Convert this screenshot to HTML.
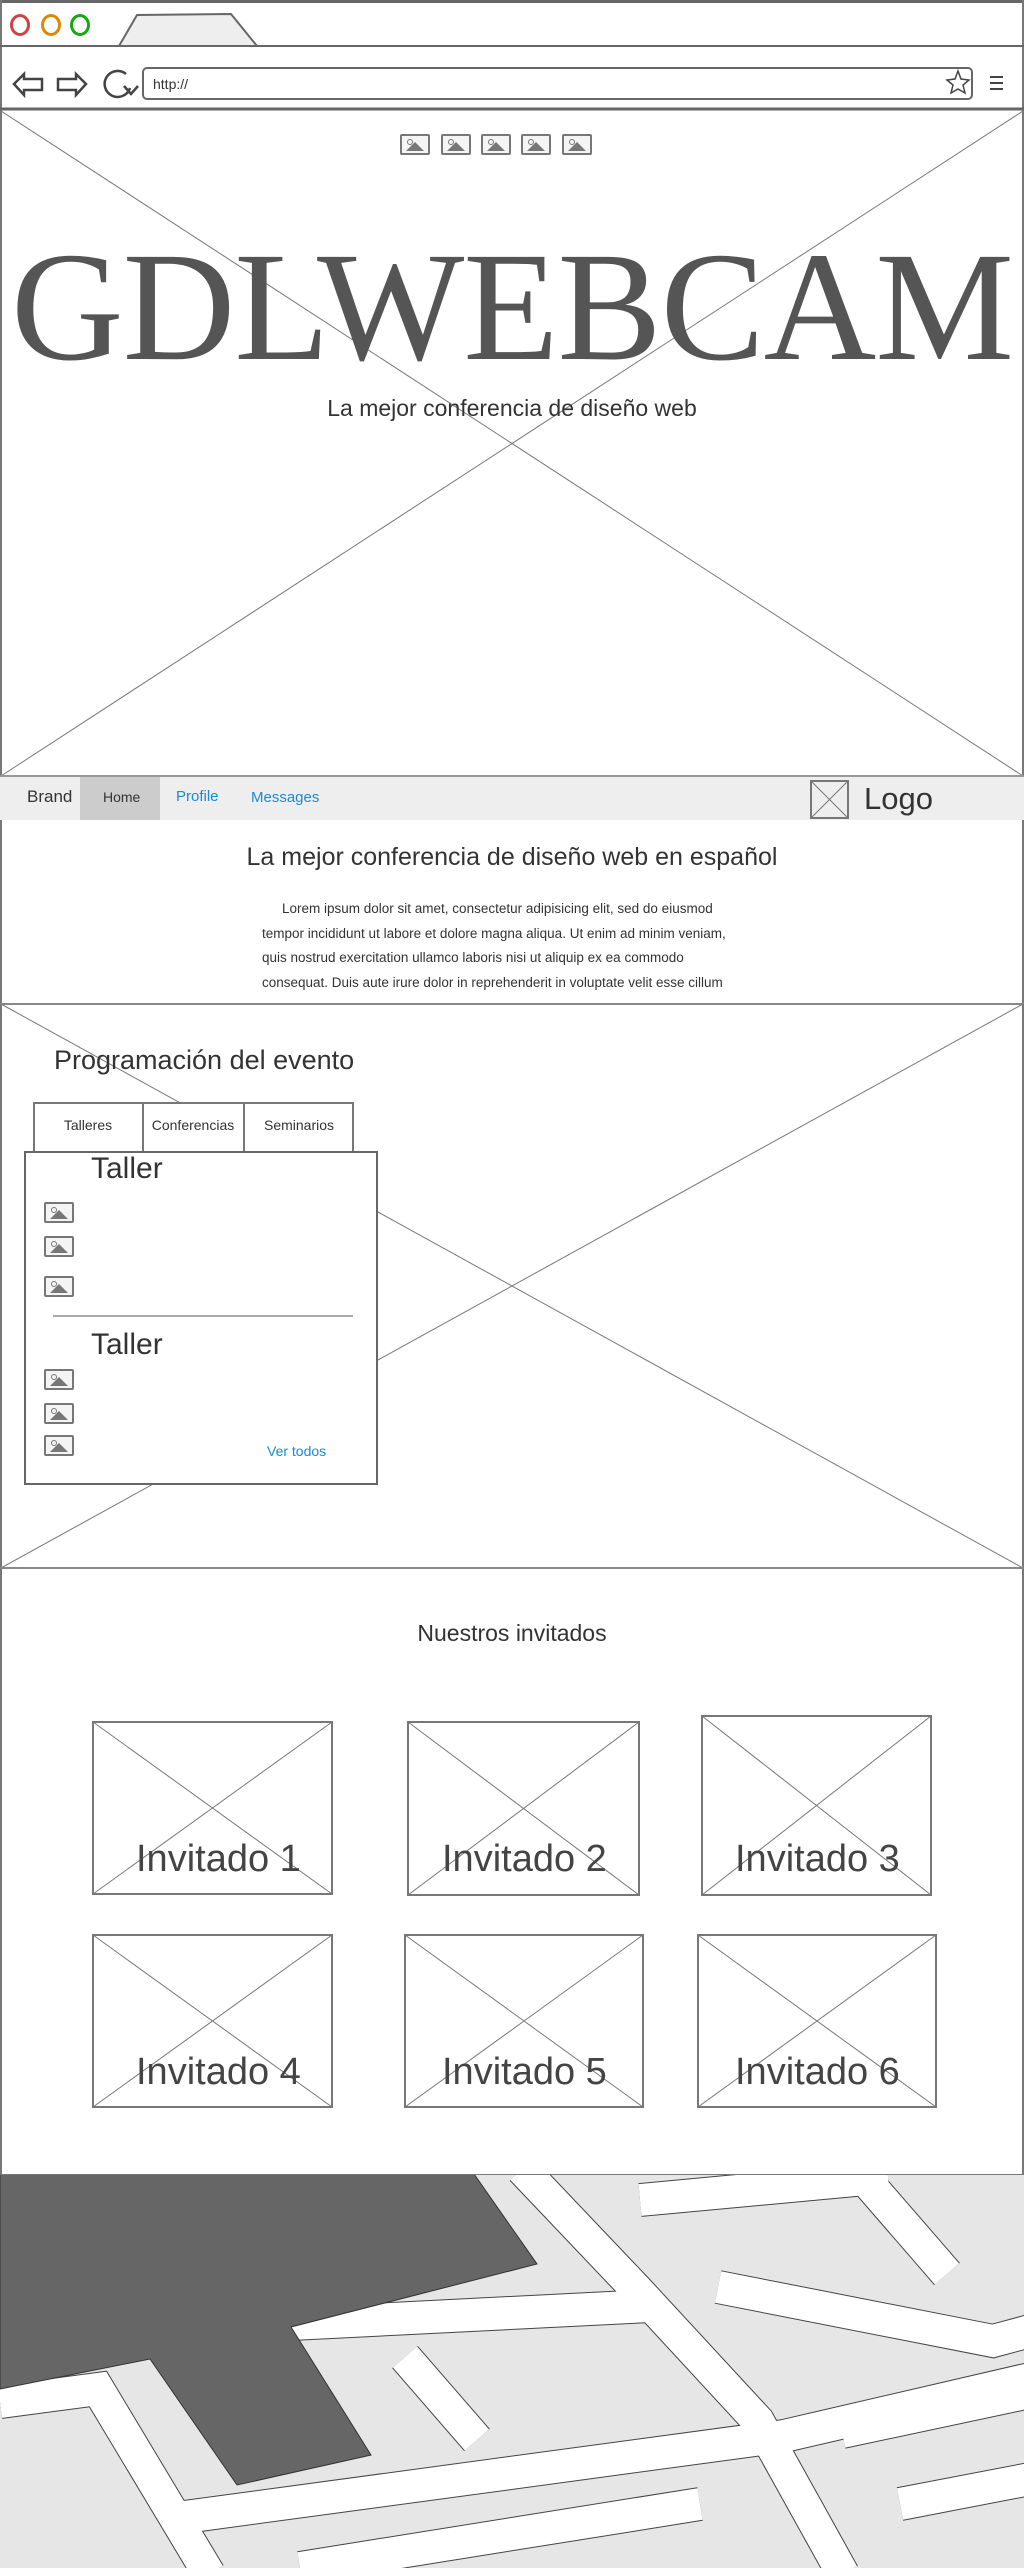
<!DOCTYPE html>
<html><head><meta charset="utf-8"><style>
*{margin:0;padding:0;box-sizing:border-box}
body{width:1024px;height:2568px;position:relative;background:#fff;font-family:"Liberation Sans",sans-serif;color:#444;overflow:hidden}
.a{position:absolute}
.ic{position:absolute;width:30px;height:21px;border:2px solid #777;border-radius:2px;background:#f4f4f4}
.ic:after{content:"";position:absolute;left:4px;bottom:2px;border-left:9px solid transparent;border-right:9px solid transparent;border-bottom:9px solid #777}
.ic:before{content:"";position:absolute;left:5px;top:3px;width:4px;height:4px;border:1px solid #777;border-radius:50%}
.lbl{position:absolute;font-size:38px;color:#444;white-space:nowrap}
</style></head><body>
<div class="a" style="left:0;top:0;width:1024px;height:3px;background:#666"></div>
<div class="a" style="left:0;top:0;width:2px;height:2174px;background:#777"></div>
<div class="a" style="left:1022px;top:0;width:2px;height:2174px;background:#777"></div>
<div class="a" style="left:10px;top:14px;width:20px;height:22px;border:3px solid #c44;border-radius:50%"></div>
<div class="a" style="left:41px;top:14px;width:20px;height:22px;border:3px solid #d80;border-radius:50%"></div>
<div class="a" style="left:70px;top:14px;width:20px;height:22px;border:3px solid #1a1;border-radius:50%"></div>
<svg class="a" style="left:0;top:0" width="1024" height="112">
<polygon points="119,46 137,15 231,14 257,46" fill="#eee" stroke="#666" stroke-width="2"/>
<line x1="0" y1="46" x2="1024" y2="46" stroke="#666" stroke-width="2"/>
<line x1="0" y1="109" x2="1024" y2="109" stroke="#666" stroke-width="3"/>
<path d="M14,84 L24,74 L24,79 L42,79 L42,90 L24,90 L24,95 Z" fill="none" stroke="#444" stroke-width="2.5"/>
<path d="M86,84 L76,74 L76,79 L58,79 L58,90 L76,90 L76,95 Z" fill="none" stroke="#444" stroke-width="2.5"/>
<path d="M130,88 A13,13 0 1 1 126,74" fill="none" stroke="#444" stroke-width="2.5"/>
<path d="M124,86 L131,94 L138,86" fill="none" stroke="#444" stroke-width="2.5"/>
<rect x="143" y="68" width="829" height="31" rx="4" fill="#fff" stroke="#666" stroke-width="2"/>
<text x="153" y="89" font-size="14" fill="#333" font-family="Liberation Sans">http://</text>
<polygon points="958,71 961,79 969,80 963,85 965,93 958,89 951,93 953,85 947,80 955,79" fill="none" stroke="#444" stroke-width="1.5"/>
<g stroke="#444" stroke-width="2"><line x1="990" y1="77" x2="1003" y2="77"/><line x1="990" y1="83" x2="1003" y2="83"/><line x1="990" y1="89" x2="1003" y2="89"/></g>
</svg>
<svg class="a" style="left:0;top:111px" width="1024" height="666">
<line x1="1" y1="0" x2="1023" y2="665" stroke="#777" stroke-width="1"/>
<line x1="1023" y1="0" x2="1" y2="665" stroke="#777" stroke-width="1"/>
</svg>
<div class="ic" style="left:400px;top:134px"></div>
<div class="ic" style="left:441px;top:134px"></div>
<div class="ic" style="left:481px;top:134px"></div>
<div class="ic" style="left:521px;top:134px"></div>
<div class="ic" style="left:562px;top:134px"></div>
<div class="a" style="left:0;top:222px;width:1024px;text-align:center;font-family:'Liberation Serif',serif;font-size:156px;line-height:170px;color:#555;letter-spacing:-1px">GDLWEBCAM</div>
<div class="a" style="left:0;top:395px;width:1024px;text-align:center;font-size:23px;color:#333">La mejor conferencia de diseño web</div>
<div class="a" style="left:0;top:775px;width:1024px;height:45px;background:#eee;border-top:2px solid #999"></div>
<div class="a" style="left:80px;top:777px;width:80px;height:43px;background:#ccc"></div>
<div class="a" style="left:27px;top:787px;font-size:17px;color:#333">Brand</div>
<div class="a" style="left:103px;top:789px;font-size:14px;color:#333">Home</div>
<div class="a" style="left:176px;top:788px;font-size:15px;color:#1a8ad4">Profile</div>
<div class="a" style="left:251px;top:789px;font-size:15px;color:#1a8ad4">Messages</div>
<svg class="a" style="left:810px;top:780px" width="40" height="40"><rect x="1" y="1" width="37" height="37" fill="none" stroke="#777" stroke-width="2"/><line x1="1" y1="1" x2="38" y2="38" stroke="#777"/><line x1="38" y1="1" x2="1" y2="38" stroke="#777"/></svg>
<div class="a" style="left:864px;top:781px;font-size:31px;color:#333">Logo</div>
<div class="a" style="left:0;top:843px;width:1024px;text-align:center;font-size:25px;color:#333">La mejor conferencia de diseño web en español</div>
<div class="a" style="left:262px;top:897px;width:490px;font-size:13.5px;line-height:24.5px;color:#333;text-indent:20px;white-space:nowrap">Lorem ipsum dolor sit amet, consectetur adipisicing elit, sed do eiusmod<br>tempor incididunt ut labore et dolore magna aliqua. Ut enim ad minim veniam,<br>quis nostrud exercitation ullamco laboris nisi ut aliquip ex ea commodo<br>consequat. Duis aute irure dolor in reprehenderit in voluptate velit esse cillum</div>
<div class="a" style="left:0;top:1003px;width:1024px;height:2px;background:#888"></div>
<svg class="a" style="left:0;top:1004px" width="1024" height="564">
<line x1="1" y1="0" x2="1023" y2="564" stroke="#777"/>
<line x1="1023" y1="0" x2="1" y2="564" stroke="#777"/>
</svg>
<div class="a" style="left:54px;top:1045px;font-size:27px;color:#333">Programación del evento</div>
<div class="a" style="left:33px;top:1102px;width:321px;height:50px;border:2px solid #777;border-bottom:none;background:#fff"></div>
<div class="a" style="left:142px;top:1102px;width:2px;height:50px;background:#777"></div>
<div class="a" style="left:243px;top:1102px;width:2px;height:50px;background:#777"></div>
<div class="a" style="left:33px;top:1117px;width:110px;text-align:center;font-size:14px;color:#333">Talleres</div>
<div class="a" style="left:143px;top:1117px;width:100px;text-align:center;font-size:14px;color:#333">Conferencias</div>
<div class="a" style="left:244px;top:1117px;width:110px;text-align:center;font-size:14px;color:#333">Seminarios</div>
<div class="a" style="left:24px;top:1151px;width:354px;height:334px;border:2px solid #666;background:#fff"></div>
<div class="a" style="left:91px;top:1152px;font-size:30px;color:#333">Taller</div>
<div class="ic" style="left:44px;top:1202px"></div>
<div class="ic" style="left:44px;top:1236px"></div>
<div class="ic" style="left:44px;top:1276px"></div>
<div class="a" style="left:53px;top:1315px;width:300px;height:2px;background:#aaa"></div>
<div class="a" style="left:91px;top:1328px;font-size:30px;color:#333">Taller</div>
<div class="ic" style="left:44px;top:1369px"></div>
<div class="ic" style="left:44px;top:1403px"></div>
<div class="ic" style="left:44px;top:1435px"></div>
<div class="a" style="left:267px;top:1443px;font-size:14px;color:#1a8ad4">Ver todos</div>
<div class="a" style="left:0;top:1567px;width:1024px;height:2px;background:#888"></div>
<div class="a" style="left:0;top:1620px;width:1024px;text-align:center;font-size:23px;color:#333">Nuestros invitados</div>
<svg class="a" style="left:0;top:1700px" width="1024" height="420" fill="none" stroke="#777">
<g stroke-width="2"><rect x="93" y="22" width="239" height="172"/><rect x="408" y="22" width="231" height="173"/><rect x="702" y="16" width="229" height="179"/><rect x="93" y="235" width="239" height="172"/><rect x="405" y="235" width="238" height="172"/><rect x="698" y="235" width="238" height="172"/></g>
<g stroke-width="1"><path d="M93,22 L332,194 M332,22 L93,194 M408,22 L639,195 M639,22 L408,195 M702,16 L931,195 M931,16 L702,195 M93,235 L332,407 M332,235 L93,407 M405,235 L643,407 M643,235 L405,407 M698,235 L936,407 M936,235 L698,407"/></g>
</svg>
<div class="lbl" style="left:136px;top:1838px">Invitado 1</div>
<div class="lbl" style="left:442px;top:1838px">Invitado 2</div>
<div class="lbl" style="left:735px;top:1838px">Invitado 3</div>
<div class="lbl" style="left:136px;top:2051px">Invitado 4</div>
<div class="lbl" style="left:442px;top:2051px">Invitado 5</div>
<div class="lbl" style="left:735px;top:2051px">Invitado 6</div>
<svg class="a" style="left:0;top:2174px" width="1024" height="394">
<rect width="1024" height="394" fill="#e6e6e6"/>
<g fill="none" stroke-linejoin="miter" stroke-linecap="butt">
<g stroke="#444" stroke-width="34">
<polyline points="522,-5 637,116 758,247 843,400"/>
<polyline points="0,228 98,215 209,400"/>
<polyline points="170,345 784,262 1030,205"/>
<polyline points="291,150 650,132"/>
<polyline points="640,26 888,3"/>
<polyline points="856,-5 947,100"/>
<polyline points="718,113 993,167 1030,157"/>
<polyline points="405,183 477,266"/>
<polyline points="842,258 1030,218"/>
<polyline points="900,330 1030,305"/>
<polyline points="300,394 700,330"/>
</g>
<g stroke="#fff" stroke-width="32">
<polyline points="522,-5 637,116 758,247 843,400"/>
<polyline points="0,228 98,215 209,400"/>
<polyline points="170,345 784,262 1030,205"/>
<polyline points="291,150 650,132"/>
<polyline points="640,26 888,3"/>
<polyline points="856,-5 947,100"/>
<polyline points="718,113 993,167 1030,157"/>
<polyline points="405,183 477,266"/>
<polyline points="842,258 1030,218"/>
<polyline points="900,330 1030,305"/>
<polyline points="300,394 700,330"/>
</g>
</g>
<polygon points="0,0 474,0 537,90 291,153 371,281 237,311 150,185 0,215" fill="#666" stroke="#333"/>
<line x1="0" y1="0" x2="1024" y2="0" stroke="#777" stroke-width="2"/>
</svg>
</body></html>
